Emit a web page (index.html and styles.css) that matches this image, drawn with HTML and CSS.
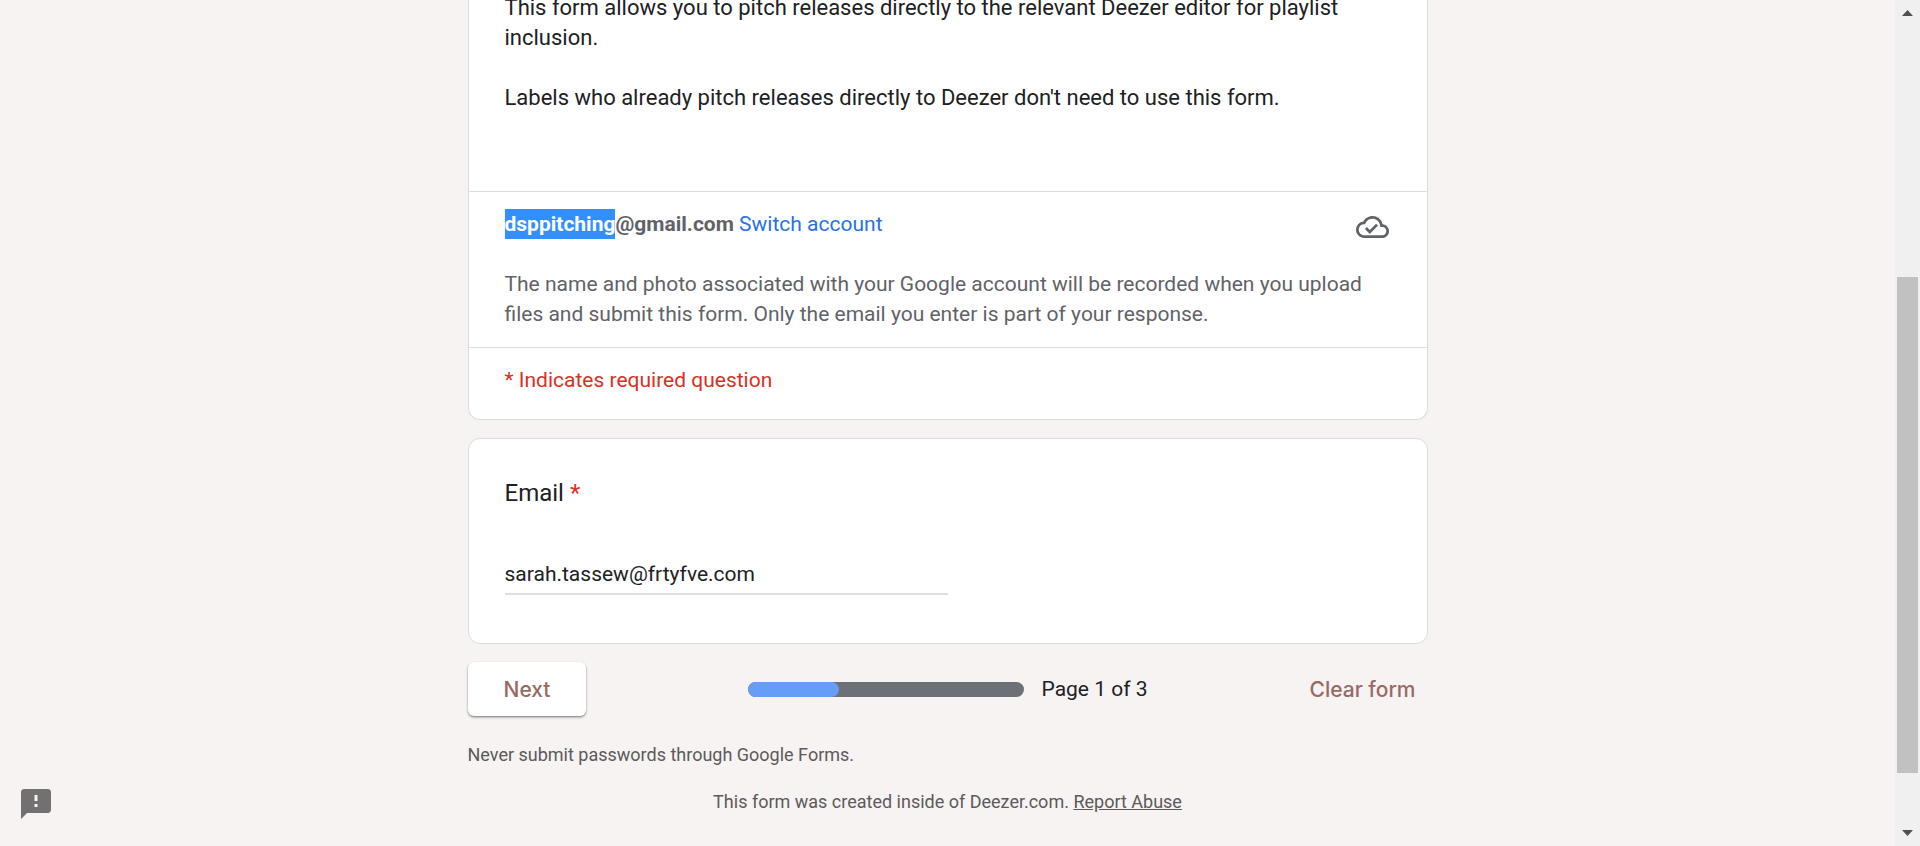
FILE: index.html
```
<!DOCTYPE html>
<html lang="en">
<head>
<meta charset="utf-8">
<meta name="viewport" content="width=device-width, initial-scale=1">
<title>Form</title>
<link rel="stylesheet" href="styles.css">
</head>
<body>
<div class="page">
  <div class="content">
    <form class="form">
      <section class="card intro">
        <div class="description">
          <p>This form allows you to pitch releases directly to the relevant Deezer editor for playlist inclusion.</p>
          <p>Labels who already pitch releases directly to Deezer don't need to use this form.</p>
        </div>
        <div class="account">
          <div class="account-row">
            <div class="account-text"><strong><span class="selected">dsppitching</span>@gmail.com</strong> <a class="switch" href="#">Switch account</a></div>
            <svg class="cloud" viewBox="0 0 24 24" aria-hidden="true"><path d="M19.35 10.04A7.49 7.49 0 0 0 12 4C9.11 4 6.6 5.64 5.35 8.04A5.994 5.994 0 0 0 0 14c0 3.31 2.69 6 6 6h13c2.76 0 5-2.24 5-5 0-2.64-2.05-4.78-4.65-4.96zM19 18H6c-2.21 0-4-1.79-4-4 0-2.05 1.53-3.76 3.56-3.97l1.07-.11.5-.95A5.469 5.469 0 0 1 12 6c2.62 0 4.88 1.86 5.39 4.43l.3 1.5 1.53.11A2.98 2.98 0 0 1 22 15c0 1.65-1.35 3-3 3zm-9-3.82l-2.09-2.09L6.5 13.5 10 17l6.01-6.01-1.41-1.41z"/></svg>
          </div>
          <p class="notice">The name and photo associated with your Google account will be recorded when you upload files and submit this form. Only the email you enter is part of your response.</p>
        </div>
        <p class="required-note">* Indicates required question</p>
      </section>
      <section class="card question">
        <label class="question-title" for="email">Email <span class="star">*</span></label>
        <input class="text-input" id="email" type="email" value="sarah.tassew@frtyfve.com" spellcheck="false">
      </section>
      <div class="actions">
        <button class="next" type="button">Next</button>
        <div class="progress">
          <div class="track"><div class="fill"></div></div>
          <span class="page-count">Page 1 of 3</span>
        </div>
        <button class="clear" type="button">Clear form</button>
      </div>
      <p class="warning">Never submit passwords through Google Forms.</p>
      <p class="footer">This form was created inside of Deezer.com. <a class="report" href="#">Report Abuse</a></p>
    </form>
  </div>
  <div class="scrollbar" aria-hidden="true">
    <svg class="arrow" viewBox="0 0 11 6"><path d="M5.5 0L11 6H0z"/></svg>
    <div class="thumb"></div>
    <svg class="arrow" viewBox="0 0 11 6"><path d="M0 0h11L5.500 6z"/></svg>
  </div>
</div>
<button class="feedback" type="button" aria-label="Report a problem">
  <svg viewBox="0 0 24 24"><path d="M20 2H4c-1.100 0-2 .9-2 2v18l4-4h14c1.100 0 2-.9 2-2V4c0-1.100-.9-2-2-2zm-7 12h-2v-2h2v2zm0-4h-2V6h2v4z"/></svg>
</button>
</body>
</html>
```
FILE: styles.css
```
* {
  box-sizing: border-box;
}

body {
  margin: 0;
  background: #f6f3f2;
  color: #202124;
  font-family: Roboto, Arial, sans-serif;
  font-size: 21px;
  line-height: 30px;
}

p {
  margin: 0;
}

a {
  text-decoration: none;
}

.page {
  display: flex;
  height: 100vh;
  overflow: hidden;
}

.content {
  flex: 1;
  padding: 0 20px;
}

.form {
  max-width: 960px;
  margin: -7px auto 0;
}

.card {
  background: #fff;
  border: 1px solid #dadce0;
  border-radius: 12px;
  margin-bottom: 18px;
}

.intro {
  border-top: 0;
  border-radius: 0 0 12px 12px;
}

.description {
  display: grid;
  gap: 30px;
  padding: 0 36px 78px;
  font-size: 22px;
}

.account {
  padding: 17px 36px 18px;
  border: 1px solid #dadce0;
  border-width: 1px 0;
  color: #5f6368;
}

.account-row {
  display: flex;
  justify-content: space-between;
  margin-bottom: 30px;
}

.selected {
  display: inline-block;
  background: #338fff;
  color: #fff;
}

.switch {
  color: #2a70e8;
}

.cloud {
  width: 33px;
  height: 36px;
  margin: 0 2px -6px 0;
  fill: #5f6368;
}

.required-note {
  padding: 17px 36px 24px;
  color: #d93025;
}

.question {
  display: flex;
  flex-direction: column;
  align-items: flex-start;
  padding: 36px 36px 48px;
}

.question-title {
  margin-bottom: 45px;
  font-size: 24px;
  line-height: 36px;
}

.star {
  color: #d93025;
}

.text-input {
  width: 50%;
  height: 39px;
  padding: 0 0 1px;
  border: 0;
  border-bottom: 2px solid #dfdfe0;
  outline: 0;
  background: transparent;
  color: inherit;
  font: inherit;
}

.actions {
  display: grid;
  grid-template-columns: 1fr auto 1fr;
  align-items: center;
  margin-bottom: 25px;
}

.next,
.clear {
  height: 54px;
  border: 0;
  border-radius: 6px;
  color: #996a64;
  font-family: Inter, Roboto, sans-serif;
  font-size: 21px;
  font-weight: 500;
}

.next {
  justify-self: start;
  padding: 0 36px;
  background: #fff;
  box-shadow: 0 1px 2px rgba(0, 0, 0, .4), 0 2px 3px rgba(0, 0, 0, .12);
}

.clear {
  justify-self: end;
  padding: 0 12px;
  background: transparent;
}

.progress {
  display: flex;
  align-items: center;
  gap: 18px;
}

.track {
  width: 276px;
  height: 15px;
  border-radius: 8px;
  background: #6c7177;
  overflow: hidden;
}

.fill {
  width: 33%;
  height: 100%;
  border-radius: 8px;
  background: #669df6;
}

.warning,
.footer {
  color: #5c5a5a;
  font-size: 18px;
  line-height: 27px;
}

.footer {
  margin-top: 20px;
  text-align: center;
}

.report {
  color: inherit;
  text-decoration: underline;
}

.scrollbar {
  display: flex;
  flex-direction: column;
  align-items: center;
  width: 25px;
  padding: 10px 2px;
  background: #f0f0f0;
}

.arrow {
  width: 11px;
  height: 6px;
  fill: #505050;
}

.thumb {
  width: 21px;
  height: 60%;
  margin: 261px 0 auto;
  background: #c1c1c1;
}

.feedback {
  position: fixed;
  left: 18px;
  bottom: 24px;
  width: 36px;
  height: 36px;
  padding: 0;
  border: 0;
  background: none;
}

.feedback svg {
  display: block;
  fill: #727070;
}
```
